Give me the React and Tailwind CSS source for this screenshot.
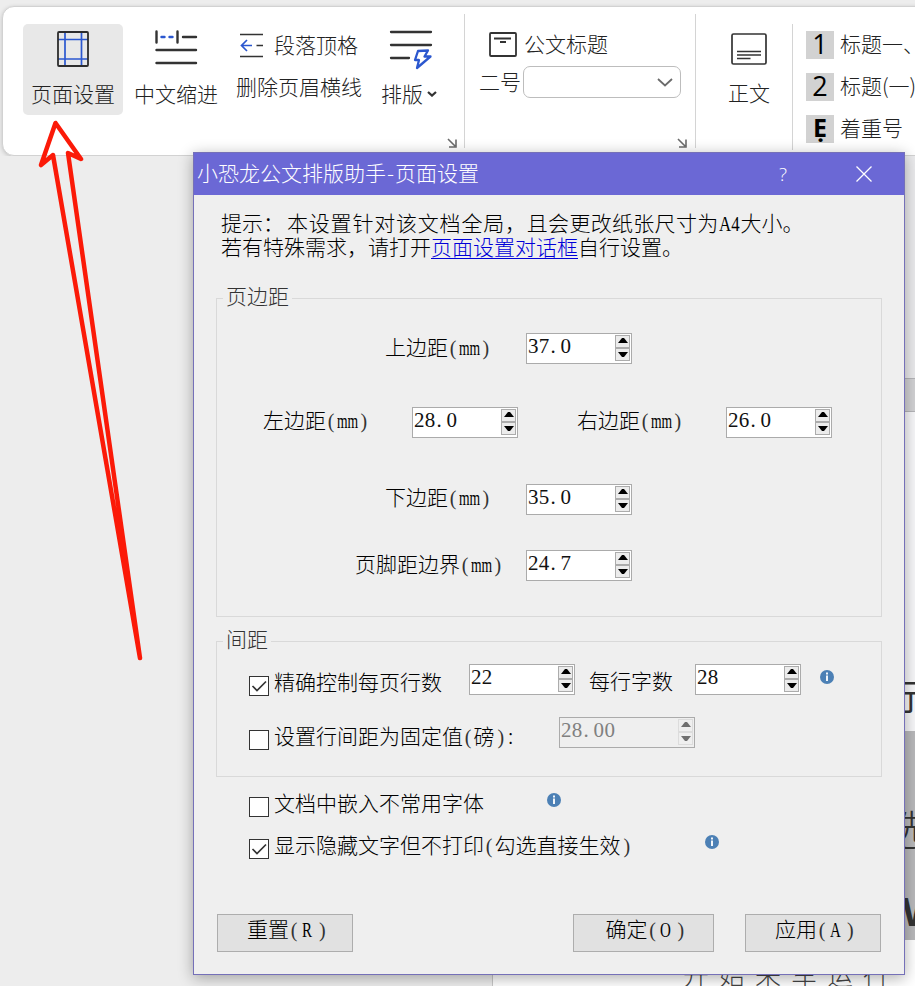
import React, { useState } from "react";

// Half-width characters, half as wide as the Chinese ones
const Open = () => (
  <span className="inline-block w-[10.5px] pr-[2px] text-right font-['Liberation_Serif',serif] text-[20px] leading-none text-[#333]">(</span>
);

const Close = () => (
  <span className="inline-block w-[10.5px] pl-[3px] font-['Liberation_Serif',serif] text-[20px] leading-none text-[#333]">)</span>
);

const Unit = () => (
  <>
    <Open />
    <span className="inline-block w-[21px] origin-left scale-x-[0.68] font-['Liberation_Serif',serif] text-[20px] leading-none">
      mm
    </span>
    <Close />
  </>
);

const Hotkey = ({ letter }) => (
  <>
    <Open />
    <span className="ml-[2px] inline-block w-[12px] origin-left scale-x-[0.75] font-['Liberation_Serif',serif] text-[20px] leading-none">
      {letter}
    </span>
    <span className="ml-[2px]">
      <Close />
    </span>
  </>
);

const Launcher = () => (
  <svg className="h-[10px] w-[10px]" viewBox="0 0 10 10" fill="none" stroke="#6b6b6b" strokeWidth="1.6">
    <path d="M1 1L8 8M9 1.5V9H2" />
  </svg>
);

const InfoIcon = () => (
  <svg className="h-[14px] w-[14px] shrink-0" viewBox="0 0 14 14">
    <circle cx="7" cy="7" r="7" fill="#4c80b5" />
    <path d="M6 5.6H8V11H6ZM6 2.6H8V4.4H6Z" fill="#f2f6fa" />
  </svg>
);

const Arrow = ({ up, disabled }) => (
  <span
    className={`flex h-[13px] w-[15px] justify-center border ${up ? "pt-[2px]" : "pt-[3px]"} ${
      disabled ? "border-[#dcdcdc] bg-[#efefef]" : "border-[#acacac] bg-[#ececec]"
    }`}
  >
    <svg className="h-[5px] w-[10px]" viewBox="0 0 10 5" fill={disabled ? "#6f6f6f" : "#000"}>
      <path d={up ? "M0 5L4 0H6L10 5Z" : "M0 0L4 5H6L10 0Z"} />
    </svg>
  </span>
);

const Spinner = ({ value, disabled, className }) => {
  const [whole, decimals] = value.split(".");
  return (
    <div
      className={`flex h-[31px] shrink-0 justify-between border border-[#ababab] p-px ${
        disabled ? "bg-[#efefef] text-[#808080]" : "bg-white text-[#111]"
      } ${className || "w-[106px]"}`}
    >
      <span className="flex font-['Liberation_Serif',serif] text-[21px] leading-[23px] tracking-[0.3px]">
        {whole}
        {decimals && <span className="inline-block w-[11px] pl-px">.</span>}
        {decimals}
      </span>
      <span className="flex flex-col">
        <Arrow up disabled={disabled} />
        <Arrow disabled={disabled} />
      </span>
    </div>
  );
};

const Check = ({ checked, onChange, className }) => (
  <button
    type="button"
    onClick={onChange}
    className={`flex h-[20px] w-[20px] shrink-0 items-center justify-center border border-[#333] bg-white ${className || ""}`}
  >
    {checked && (
      <svg className="h-[14px] w-[16px]" viewBox="0 0 16 14" fill="none" stroke="#333" strokeWidth="1.7">
        <path d="M1.5 7L6 11.5L15 2.5" />
      </svg>
    )}
  </button>
);

const styleRows = [
  { mark: "1", label: "标题一、" },
  { mark: "2", label: "标题(一)" },
  { mark: "Ẹ", label: "着重号", bold: true },
];

const Ribbon = () => (
  <div className="mt-[6px] ml-[2px] flex h-[150px] w-[940px] items-start rounded-[12px] border border-[#d2d2d2] bg-white pl-5 text-[#222] shadow-[0_1px_4px_rgba(0,0,0,0.18)]">
    <button className="mt-[17px] flex h-[91px] w-[100px] shrink-0 flex-col items-center rounded-[5px] bg-[#e8e8e8] pt-[7px]">
      <svg className="h-[36px] w-[32px]" viewBox="0 0 32 36" fill="none">
        <path d="M8 1V35M24.5 1V35M1 8.5H31M1 28H31" stroke="#2b57cf" strokeWidth="1.7" />
        <rect x="1" y="1" width="30" height="34" rx="1" stroke="#2d2d2d" strokeWidth="1.8" />
      </svg>
      <span className="mt-[14px]">页面设置</span>
    </button>

    <div className="mt-[17px] ml-[11px] flex w-[84px] shrink-0 flex-col items-center pt-[6px]">
      <svg className="h-[37px] w-[44px]" viewBox="0 0 44 37" fill="none" stroke="#333" strokeWidth="2.4" strokeLinecap="round">
        <path d="M2.5 1.5V12.5M23.5 1.5V12.5M29 7H42M2.5 20H42M2.5 33H42" />
        <path d="M7.5 7H10.5M15.5 7H18.5" stroke="#2b57cf" />
      </svg>
      <span className="mt-[14px]">中文缩进</span>
    </div>

    <div className="mt-[26px] ml-[18px] w-[127px] shrink-0">
      <div className="flex items-start pl-[4px]">
        <svg className="h-[25px] w-[23px]" viewBox="0 0 23 25" fill="none" strokeWidth="1.7">
          <path d="M0 1.5H23M0 23.5H23M16.5 12.5H23" stroke="#333" />
          <path d="M12 12.5H1.5M7 7L1.5 12.5L7 18" stroke="#2b57cf" />
        </svg>
        <span className="-mt-px ml-[11px]">段落顶格</span>
      </div>
      <div className="mt-[16px]">删除页眉横线</div>
    </div>

    <div className="mt-[23px] ml-[18px] w-[60px] shrink-0">
      <svg className="ml-[8px] h-[40px] w-[44px]" viewBox="0 0 44 40" fill="none" strokeLinecap="round">
        <path d="M2 2H42M2 15H42M2 28H20" stroke="#333" strokeWidth="2.3" />
        <path d="M29 21L39 20.5L35.5 26.5H41.5L28 38L30 30H26Z" stroke="#2b57cf" strokeWidth="2.3" strokeLinejoin="round" />
      </svg>
      <div className="mt-[11px] flex items-center">
        <span>排版</span>
        <svg className="mt-[2px] ml-[4px] h-[6px] w-[10px]" viewBox="0 0 10 6" fill="none" stroke="#333" strokeWidth="2.2">
          <path d="M1 1L5 4.6L9 1" />
        </svg>
      </div>
    </div>
    <div className="mt-[131px] ml-[6px] shrink-0">
      <Launcher />
    </div>

    <div className="mt-[7px] ml-[7px] h-[134px] w-px shrink-0 bg-[#d4d4d4]" />

    <div className="mt-[25px] ml-[14px] w-[202px] shrink-0">
      <div className="flex h-[26px] items-start pl-[10px]">
        <svg className="h-[25px] w-[28px]" viewBox="0 0 28 25" fill="none" stroke="#333" strokeWidth="1.8">
          <rect x="1" y="1" width="26" height="23" rx="1" />
          <path d="M5 6.5H22M11 10H17" />
        </svg>
        <span className="-mt-px ml-[7px]">公文标题</span>
      </div>
      <div className="mt-[8px] flex items-center">
        <span className="-mt-[3px]">二号</span>
        <div className="ml-[2px] flex h-[32px] w-[158px] items-center justify-end rounded-[7px] border border-[#bdbdbd] pr-[7px]">
          <svg className="h-[9px] w-[16px]" viewBox="0 0 16 9" fill="none" stroke="#6b6b6b" strokeWidth="1.8">
            <path d="M1 1L8 7.5L15 1" />
          </svg>
        </div>
      </div>
      <div className="-mr-[6px] mt-[40px] flex justify-end">
        <Launcher />
      </div>
    </div>

    <div className="mt-[7px] ml-[14px] h-[134px] w-px shrink-0 bg-[#d4d4d4]" />

    <div className="mt-[26px] ml-[32px] flex w-[42px] shrink-0 flex-col items-center">
      <svg className="h-[32px] w-[36px]" viewBox="0 0 36 32" fill="none" stroke="#333" strokeWidth="1.7">
        <rect x="1" y="1" width="34" height="30" rx="1.5" />
        <path d="M6 18.5H30M6 22H30M6 25.5H19.5" />
      </svg>
      <span className="mt-[15px]">正文</span>
    </div>

    <div className="mt-[17px] ml-[22px] h-[126px] w-px shrink-0 bg-[#d4d4d4]" />

    <div className="mt-[24px] ml-[13px] flex shrink-0 flex-col gap-[14px]">
      {styleRows.map((row) => (
        <div key={row.label} className="flex h-[28px] items-start">
          <span
            className={`flex h-[28px] w-[28px] items-center justify-center bg-[#d2d2d2] text-black ${
              row.bold
                ? "pb-[5px] font-['Open_Sans',sans-serif] text-[25px] font-bold"
                : "pb-[3px] font-['Open_Sans',sans-serif] text-[27px] font-medium"
            }`}
          >
            {row.mark}
          </span>
          <span className="ml-[6px] whitespace-nowrap">{row.label}</span>
        </div>
      ))}
    </div>
  </div>
);

// Word document behind the dialog
const DocumentPage = () => (
  <div className="flex h-[830px]">
    <div className="w-[492px] shrink-0 bg-[#ededed]" />
    <div className="flex w-[423px] shrink-0 flex-col overflow-hidden">
      <div className="h-[222px] bg-[#ebebed]" />
      <div className="h-[34px] border-y border-[#b5b5b8] bg-[#d2d2d4]" />
      <div className="h-[319px] border-l border-[#c8c8c8] bg-[#f8f8fa] pt-[262px] pl-[391px] text-[35px] leading-[42px] font-normal text-[#333]">
        <span className="whitespace-nowrap">行</span>
      </div>
      <div className="h-[209px] bg-[#b9b9bb] pt-[70px] pl-[393px] text-[42px] leading-[54px] text-[#333]">
        <div className="whitespace-nowrap">选</div>
        <div className="mt-[30px] ml-[17px] font-['Liberation_Sans',sans-serif] text-[40px] font-bold whitespace-nowrap">W</div>
      </div>
      <div className="h-[46px] border-l border-[#c8c8c8] bg-white pt-[19px] pl-[190px] text-[26px] leading-[30px] tracking-[10px] whitespace-nowrap text-[#444]">
        开始来车运行
      </div>
    </div>
  </div>
);

const PageSetupDialog = () => {
  const [options, setOptions] = useState({
    lines: true,
    spacing: false,
    embed: false,
    hidden: true,
  });

  const toggle = (name) => setOptions((prev) => ({ ...prev, [name]: !prev[name] }));

  return (
    <div className="absolute top-[152px] left-[193px] h-[823px] w-[712px] border border-[#7570b8] bg-[#efefef] whitespace-nowrap text-black shadow-[0_3px_14px_rgba(0,0,0,0.32)]">
      <div className="flex h-[42px] items-center bg-[#6b68d5] pl-[3px] text-white">
        <span className="pb-[5px]">
          小恐龙公文排版助手<span className="inline-block w-[9px] text-center">-</span>页面设置
        </span>
        <span className="ml-[298px] w-[12px] pb-px text-center font-['Open_Sans',sans-serif] text-[19px] font-light">?</span>
        <svg className="ml-[67px] h-[16px] w-[16px]" viewBox="0 0 16 16" fill="none" stroke="#fff" strokeWidth="1.3">
          <path d="M0.5 0.5L15.5 15.5M15.5 0.5L0.5 15.5" />
        </svg>
      </div>

      <div className="px-[22px] pt-[15px]">
        <div className="pl-[5px]">
          <div>
            提示：<span className="ml-[3px] tracking-[0.8px]">本设置针对该文档全局，</span>
            <span className="tracking-[0.3px]">且会更改纸张尺寸为</span>
            <span className="inline-block w-[22px] origin-left scale-x-[0.84] font-['Liberation_Serif',serif] text-[20px] leading-none">
              A4
            </span>
            大小。
          </div>
          <div>
            若有特殊需求，请打开
            <a href="#" className="text-[#0000d8] underline decoration-1 underline-offset-[3px]">
              页面设置对话框
            </a>
            自行设置。
          </div>
        </div>

        <fieldset className="mt-[25px] h-[334px] border border-[#d9d9d9]">
          <legend className="ml-[6px] px-[3px] pb-[6px] text-[#333]">页边距</legend>
          <div className="mt-[20px] flex pl-[168px]">
            <label className="w-[141px] pt-px">上边距<Unit /></label>
            <Spinner value="37.0" />
          </div>
          <div className="mt-[43px] flex pl-[46px]">
            <label className="w-[149px]">左边距<Unit /></label>
            <Spinner value="28.0" />
            <label className="ml-[59px] w-[149px]">右边距<Unit /></label>
            <Spinner value="26.0" />
          </div>
          <div className="mt-[46px] flex pl-[168px]">
            <label className="w-[141px]">下边距<Unit /></label>
            <Spinner value="35.0" />
          </div>
          <div className="mt-[35px] flex pl-[138px]">
            <label className="w-[171px] pt-px">页脚距边界<Unit /></label>
            <Spinner value="24.7" />
          </div>
        </fieldset>

        <fieldset className="mt-[9px] h-[151px] border border-[#d9d9d9]">
          <legend className="ml-[6px] px-[3px] pb-[6px] text-[#333]">间距</legend>
          <div className="mt-[8px] flex pl-[32px]">
            <Check checked={options.lines} onChange={() => toggle("lines")} className="mt-[12px]" />
            <span className="ml-[5px] w-[195px] pt-[5px]">精确控制每页行数</span>
            <Spinner value="22" />
            <span className="ml-[14px] w-[106px] pt-[4px]">每行字数</span>
            <Spinner value="28" />
            <span className="ml-[19px] pt-[6px]">
              <InfoIcon />
            </span>
          </div>
          <div className="mt-[21px] flex pl-[32px]">
            <Check checked={options.spacing} onChange={() => toggle("spacing")} className="mt-[13px]" />
            <span className="ml-[5px] w-[285px] pt-[6px]">
              设置行间距为固定值<Open />磅<Close />
              <span className="ml-[3px]">:</span>
            </span>
            <Spinner value="28.00" disabled className="w-[136px]" />
          </div>
        </fieldset>

        <div className="mt-[13px] flex pl-[33px]">
          <Check checked={options.embed} onChange={() => toggle("embed")} className="mt-[7px]" />
          <span className="ml-[5px] w-[273px]">文档中嵌入不常用字体</span>
          <span className="pt-[3px]">
            <InfoIcon />
          </span>
        </div>
        <div className="mt-[15px] flex pl-[33px]">
          <Check checked={options.hidden} onChange={() => toggle("hidden")} className="mt-[7px]" />
          <span className="ml-[5px] w-[431px]">
            显示隐藏文字但不打印<Open />勾选直接生效<Close />
          </span>
          <span className="pt-[3px]">
            <InfoIcon />
          </span>
        </div>

        <div className="mt-[55px] flex pl-px">
          <button className="h-[38px] w-[136px] border border-[#adadad] bg-[#e1e1e1] pb-[10px] pl-[3px]">
            重置<Hotkey letter="R" />
          </button>
          <button className="ml-[220px] h-[38px] w-[141px] border border-[#adadad] bg-[#e1e1e1] pb-[10px] pl-[3px]">
            确定<Hotkey letter="O" />
          </button>
          <button className="ml-[31px] h-[38px] w-[136px] border border-[#adadad] bg-[#e1e1e1] pb-[10px] pl-[3px]">
            应用<Hotkey letter="A" />
          </button>
        </div>
      </div>
    </div>
  );
};

export default function App() {
  return (
    <div className="relative h-[986px] w-[915px] overflow-hidden bg-[#ededed] font-['Noto_Sans_CJK_SC',sans-serif] text-[21px] leading-[24px] font-light">
      <Ribbon />
      <DocumentPage />
      <PageSetupDialog />
      {/* Hand-drawn arrow pointing at the page setup button */}
      <svg
        className="pointer-events-none absolute top-[110px] left-[30px] h-[560px] w-[130px]"
        viewBox="30 110 130 560"
        fill="none"
        stroke="#fb1a08"
        strokeWidth="4.5"
        strokeLinecap="round"
        strokeLinejoin="round"
      >
        <path d="M140 658L53 155L41 165L55.5 123L81 159L68 153L140 658" />
      </svg>
    </div>
  );
}
